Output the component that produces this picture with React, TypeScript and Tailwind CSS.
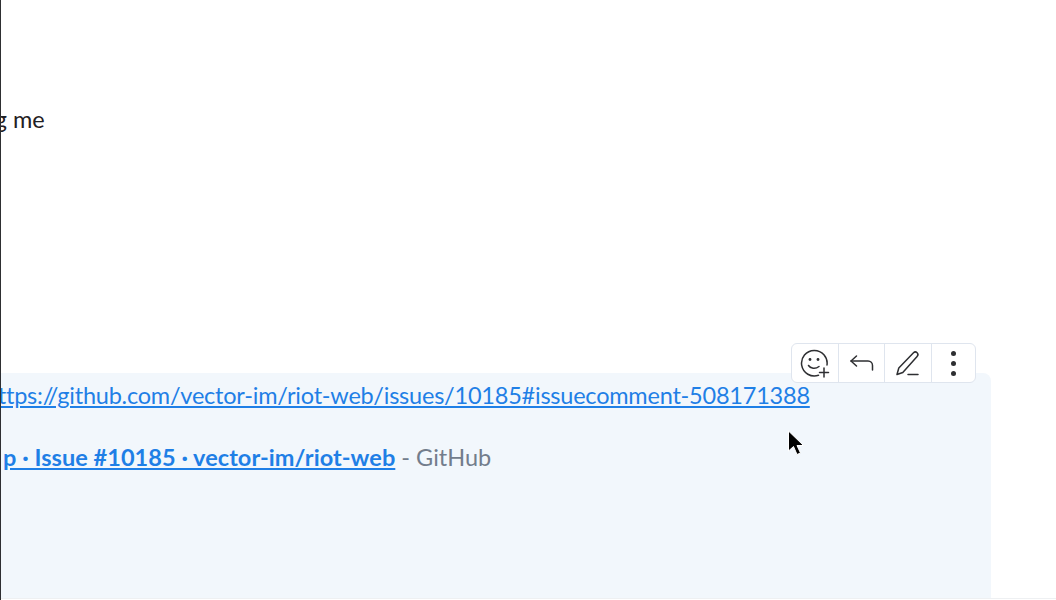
export default function App() {
  const font = { fontFamily: '"Lato", "Noto Sans", sans-serif' };
  return (
    <div className="relative h-[600px] w-[1056px] overflow-hidden bg-white" style={font}>
      <div className="absolute left-0 top-0 z-10 h-full w-px bg-[#2e2f32]" />
      <div className="flex h-[373px] flex-col">
        <p className="ml-[-24px] mt-[105px] whitespace-nowrap text-[23.5px] leading-[28px] text-[#1f2023]">
          ing me
        </p>
      </div>
      <div className="h-[225px] w-[991px] rounded-tr-[8px] bg-[#f2f7fc] pt-[8px]">
        <a className="ml-[-15px] block whitespace-nowrap text-[23.5px] leading-[28px] tracking-[-0.22px] text-[#1f7fe6] underline">
          https://github.com/vector-im/riot-web/issues/10185#issuecomment-508171388
        </a>
        <p className="ml-[3px] mt-[34px] whitespace-nowrap text-[23.5px] leading-[28px] text-[#737d8c]">
          <a className="font-bold tracking-[0.05px] text-[#1f7fe6] underline">p · Issue #10185 · vector-im/riot-web</a>
          <span> - GitHub</span>
        </p>
      </div>
      <div className="h-px w-full bg-[#eef0f2]" />

      <div className="absolute left-[791px] top-[343px] flex h-[40px] w-[185px] rounded-[6px] border border-[#dfe5ee] bg-white">
        <div className="flex w-[47px] items-center justify-center border-r border-[#dfe5ee]">
          <svg className="mr-[1px]" width="30" height="30" viewBox="0 0 30 30" fill="none" stroke="#2e2f32" strokeWidth="1.5" strokeLinecap="round">
            <path d="M18.5 27.3A12.8 12.8 0 1 1 27 17" />
            <circle cx="10" cy="11.5" r="1.4" fill="#2e2f32" stroke="none" />
            <circle cx="18" cy="11.5" r="1.4" fill="#2e2f32" stroke="none" />
            <path d="M8.5 17.5c1.8 3 7 3.8 10.5 1" />
            <path d="M24 20v9M19.5 24.5h9" />
          </svg>
        </div>
        <div className="flex w-[46px] items-center justify-center border-r border-[#dfe5ee]">
          <svg width="26" height="18" viewBox="0 0 26 18" fill="none" stroke="#2e2f32" strokeWidth="1.5" strokeLinecap="round" strokeLinejoin="round">
            <path d="M7.5 2 2 7l5.5 5" />
            <path d="M2 7h17c2.6 0 4.5 2 4.5 4.5V16" />
          </svg>
        </div>
        <div className="flex w-[47px] items-center justify-center border-r border-[#dfe5ee]">
          <svg width="26" height="26" viewBox="0 0 26 26" fill="none" stroke="#2e2f32" strokeWidth="1.5" strokeLinecap="round" strokeLinejoin="round">
            <path d="M2 24.5 3.8 18 18.5 2.8c1-1 2.6-1 3.6 0s1 2.6 0 3.6L7.8 22.5 2 24.5Z" />
            <path d="M13 24.5h10" />
          </svg>
        </div>
        <div className="flex flex-1 flex-col items-center justify-center gap-[5px]">
          <span className="h-[5px] w-[5px] rounded-full bg-[#2e2f32]" />
          <span className="h-[5px] w-[5px] rounded-full bg-[#2e2f32]" />
          <span className="h-[5px] w-[5px] rounded-full bg-[#2e2f32]" />
        </div>
      </div>

      <svg className="absolute left-[786px] top-[429px]" width="20" height="28" viewBox="0 0 20 28">
        <path d="M2.5 2v20l5-4.5 3.5 8 3.5-1.5-3.5-7.5h6.5L2.5 2Z" fill="#000" stroke="#fff" strokeWidth="1" />
      </svg>
    </div>
  );
}
